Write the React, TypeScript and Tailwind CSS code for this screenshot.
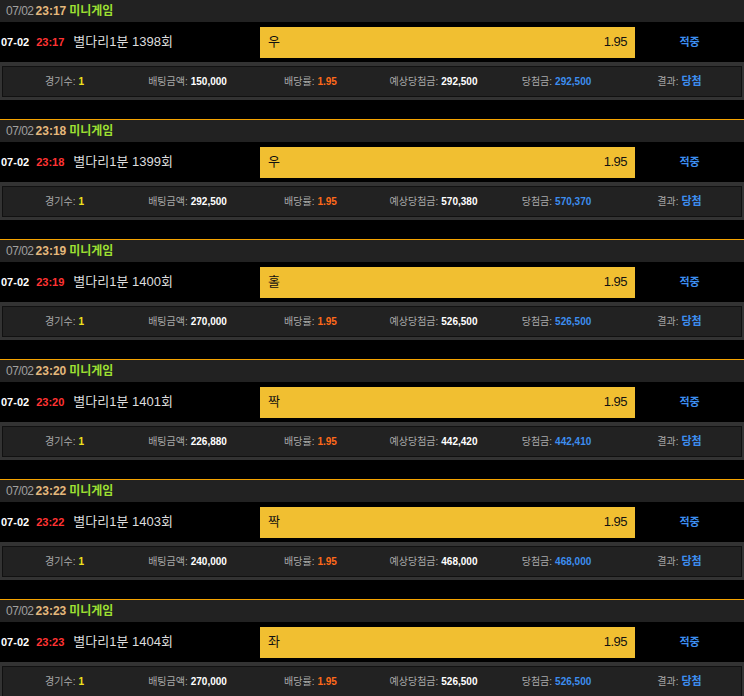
const BETS = [
  { time: '23:17', round: '1398', pick: '우', amount: '150,000', expected: '292,500', won: '292,500' },
  { time: '23:18', round: '1399', pick: '우', amount: '292,500', expected: '570,380', won: '570,370' },
  { time: '23:19', round: '1400', pick: '홀', amount: '270,000', expected: '526,500', won: '526,500' },
  { time: '23:20', round: '1401', pick: '짝', amount: '226,880', expected: '442,420', won: '442,410' },
  { time: '23:22', round: '1403', pick: '짝', amount: '240,000', expected: '468,000', won: '468,000' },
  { time: '23:23', round: '1404', pick: '좌', amount: '270,000', expected: '526,500', won: '526,500' },
];

const font = { fontFamily: '"Liberation Sans", "Noto Sans CJK KR", sans-serif' };

function Stat({ label, children }: { label: string; children: React.ReactNode }) {
  return (
    <div className="flex-1 flex items-center justify-center gap-[3px] text-[10px]">
      <span className="text-[#a8a8a8]">{label}:</span>
      {children}
    </div>
  );
}

export default function App() {
  return (
    <div className="w-[744px] h-[696px] bg-black overflow-hidden" style={font}>
      {BETS.map((bet, i) => (
        <div key={bet.round}>
          {i > 0 && <div className="h-[1px] bg-[#f5a300]" />}
          <div className="h-[22px] bg-[#222222] flex items-center pl-[6px] text-[12px] gap-[2px]">
            <span className="text-[#a0a0a0] tracking-[-0.5px]">07/02</span>
            <span className="text-[#e4b87c] font-bold">{bet.time}</span>
            <span className="text-[#9ee032] font-bold ml-[1px]">미니게임</span>
          </div>

          <div className="h-[40px] flex items-center">
            <div className="w-[260px] flex items-center pl-[1px]">
              <span className="text-white font-bold text-[11px]">07-02</span>
              <span className="text-[#ff3333] font-bold text-[11px] ml-[7px]">{bet.time}</span>
              <span className="text-[#dddddd] text-[13px] ml-[9px]">별다리1분 {bet.round}회</span>
            </div>
            <div className="w-[375px] h-[31px] bg-[#f1bf31] flex items-center justify-between px-[8px] text-[13px] text-[#111]">
              <span>{bet.pick}</span>
              <span className="tracking-[-0.5px]">1.95</span>
            </div>
            <div className="flex-1 text-center text-[11px] font-bold text-[#3d8ef0]">적중</div>
          </div>

          <div className="h-[38px] bg-[#333333] px-[2px] pt-[4px]">
            <div className="h-[31px] bg-[#222222] border border-[#111111] flex">
              <Stat label="경기수">
                <span className="text-[#f2e21c] font-bold">1</span>
              </Stat>
              <Stat label="배팅금액">
                <span className="text-white font-bold">{bet.amount}</span>
              </Stat>
              <Stat label="배당률">
                <span className="text-[#ff6a1a] font-bold">1.95</span>
              </Stat>
              <Stat label="예상당첨금">
                <span className="text-white font-bold">{bet.expected}</span>
              </Stat>
              <Stat label="당첨금">
                <span className="text-[#3d8ef0] font-bold">{bet.won}</span>
              </Stat>
              <Stat label="결과">
                <span className="text-[#3d8ef0] font-bold text-[11px]">당첨</span>
              </Stat>
            </div>
          </div>

          <div className="h-[19px]" />
        </div>
      ))}
    </div>
  );
}
